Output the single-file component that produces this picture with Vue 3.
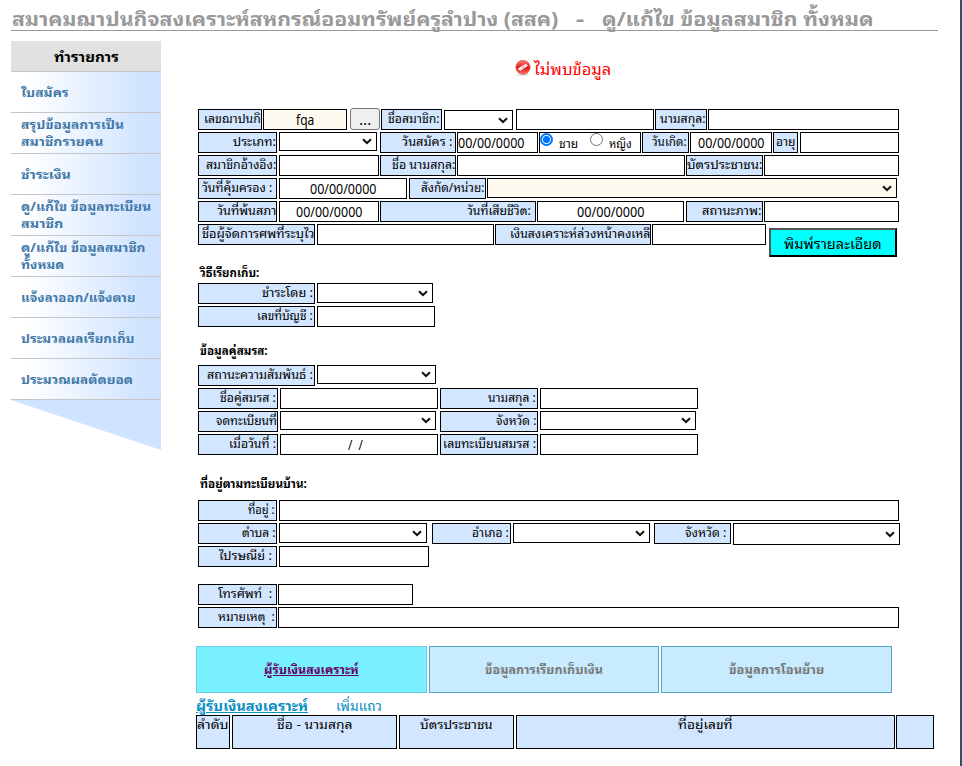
<script setup>
// Stretches a text run to its designed advance width, whatever face is installed.
const vFit = {
  mounted(el, { value }) {
    const natural = el.offsetWidth
    if (!value || !natural) return
    el.style.transform = `scaleX(${value / natural})`
    el.style.marginRight = `${value - natural}px`
  },
}

const menu = [
  [['ใบสมัคร', 48]],
  [['สรุปข้อมูลการเป็น', 103], ['สมาชิกรายคน', 82]],
  [['ชำระเงิน', 50]],
  [['ดู/แก้ไข ข้อมูลทะเบียน', 130], ['สมาชิก', 42]],
  [['ดู/แก้ไข ข้อมูลสมาชิก', 125], ['ทั้งหมด', 43]],
  [['แจ้งลาออก/แจ้งตาย', 115]],
  [['ประมวลผลเรียกเก็บ', 114]],
  [['ประมวณผลตัดยอด', 112]],
]

// Each cell: kind, left edge, right edge, text, text start, text end, height.
const group = (title, rows) => ({
  title,
  rows: rows.map((cells) => {
    let cursor = 198
    return cells.map(([kind, from, to, text = '', start = 0, end = 0, height = 21]) => {
      const cell = {
        kind,
        text,
        fit: end - start,
        box: { marginLeft: `${from - cursor}px`, width: `${to - from}px`, height: `${height}px` },
        lead: { marginLeft: `${start - from - 1}px` },
      }
      cursor = to
      return cell
    })
  }),
})

const zero = '00/00/0000'
const groups = [
  group(null, [
    [['label', 198, 262, 'เลขฌาปนกิ', 204, 261], ['input ivory', 263, 347, 'fqa', 296, 314], ['more', 350, 380, '...', 359, 371, 22], ['label', 381, 442, 'ชื่อสมาชิก:', 388, 440], ['select low', 444, 513, '', 0, 0, 20], ['input', 516, 654], ['label', 655, 707, 'นามสกุล:', 660, 706], ['input', 708, 899]],
    [['label', 198, 277, 'ประเภท:', 233, 276], ['select', 279, 377, '', 0, 0, 19], ['label', 380, 456, 'วันสมัคร :', 402, 452], ['input', 457, 538, zero, 458, 524], ['radio', 539, 641], ['label', 642, 689, 'วันเกิด:', 652, 687], ['input', 690, 772, zero, 698, 764], ['label', 773, 798, 'อายุ', 776, 795], ['input', 800, 899]],
    [['label', 198, 277, 'สมาชิกอ้างอิง:', 206, 276], ['input', 279, 379], ['label', 380, 456, 'ชื่อ นามสกุล:', 392, 455], ['input', 457, 685], ['label', 686, 763, 'บัตรประชาชน:', 687, 762], ['input', 764, 899]],
    [['label', 198, 277, 'วันที่คุ้มครอง :', 202, 272], ['input', 279, 407, zero, 310, 376], ['label', 409, 486, 'สังกัด/หน่วย:', 421, 484], ['select ivory', 487, 897, '', 0, 0, 20]],
    [['label', 198, 277, 'วันที่พ้นสภา', 217, 276], ['input', 279, 379, zero, 296, 362], ['label', 380, 536, 'วันที่เสียชีวิต:', 467, 531], ['input', 537, 684, zero, 577, 644], ['label', 686, 763, 'สถานะภาพ:', 702, 762], ['input', 764, 899]],
    [['label', 198, 315, 'ชื่อผู้จัดการศพที่ระบุไว', 202, 314], ['input', 317, 494], ['label', 495, 651, 'เงินสงเคราะห์ล่วงหน้าคงเหลื', 510, 650], ['input', 652, 766], ['print', 769, 897, 'พิมพ์รายละเอียด', 783, 881, 29]],
  ]),
  group('วิธีเรียกเก็บ:', [
    [['label', 198, 315, 'ชำระโดย :', 262, 313], ['select', 317, 433, '', 0, 0, 20]],
    [['label', 198, 315, 'เลขที่บัญชี :', 257, 313], ['input', 317, 435]],
  ]),
  group('ข้อมูลคู่สมรส:', [
    [['label', 198, 315, 'สถานะความสัมพันธ์ :', 207, 313], ['select', 317, 436, '', 0, 0, 19]],
    [['label', 198, 278, 'ชื่อคู่สมรส :', 220, 276], ['input', 280, 438], ['label', 440, 538, 'นามสกุล :', 488, 536], ['input', 540, 698]],
    [['label', 198, 278, 'จดทะเบียนที่', 216, 277], ['select', 280, 436, '', 0, 0, 19], ['label', 440, 538, 'จังหวัด :', 496, 536], ['select', 540, 696, '', 0, 0, 19]],
    [['label', 198, 278, 'เมื่อวันที่ :', 229, 276], ['input', 280, 438, '/  /', 348, 363], ['label', 440, 538, 'เลขทะเบียนสมรส :', 443, 536], ['input', 540, 698]],
  ]),
  group('ที่อยู่ตามทะเบียนบ้าน:', [
    [['label', 198, 277, 'ที่อยู่ :', 248, 275], ['input', 279, 899]],
    [['label', 198, 277, 'ตำบล :', 242, 275], ['select', 279, 427, '', 0, 0, 20], ['label', 432, 511, 'อำเภอ :', 472, 509], ['select', 513, 650, '', 0, 0, 20], ['label', 654, 731, 'จังหวัด :', 685, 726], ['select', 733, 900, '', 0, 0, 22]],
    [['label', 198, 277, 'ไปรษณีย์ :', 219, 272], ['input', 279, 429]],
  ]),
  group(null, [
    [['label', 198, 277, 'โทรศัพท์  :', 218, 272], ['input', 278, 413]],
    [['label', 198, 277, 'หมายเหตุ  :', 218, 275], ['input', 278, 899]],
  ]),
]
const titleWidths = [0, 59, 68, 107, 0]

const tabs = [
  ['ผู้รับเงินสงเคราะห์', 95],
  ['ข้อมูลการเรียกเก็บเงิน', 118],
  ['ข้อมูลการโอนย้าย', 95],
]
const columns = [['ลำดับ', 31], ['ชื่อ - นามสกุล', 76], ['บัตรประชาชน', 73], ['ที่อยู่เลขที่', 55], ['', 0]]
</script>

<template>
  <div class="page">
    <header class="title">
      <span v-fit="546" class="t">สมาคมฌาปนกิจสงเคราะห์สหกรณ์ออมทรัพย์ครูลำปาง (สสค)</span>
      <span v-fit="8" class="t">-</span>
      <span v-fit="272" class="t">ดู/แก้ไข ข้อมูลสมาชิก ทั้งหมด</span>
    </header>
    <div class="body">
      <nav class="side">
        <h2><span v-fit="65" class="t">ทำรายการ</span></h2>
        <a v-for="(item, i) in menu" :key="i">
          <div v-for="line in item" :key="line[0]"><span v-fit="line[1]" class="t">{{ line[0] }}</span></div>
        </a>
        <div class="tail"></div>
      </nav>
      <main>
        <div class="alert">
          <svg width="16" height="16" viewBox="0 0 16 16">
            <defs>
              <linearGradient id="ball" x1="0" y1="0" x2="0" y2="1">
                <stop offset="0" stop-color="#f58080" />
                <stop offset=".45" stop-color="#e52b2b" />
                <stop offset=".55" stop-color="#dc1414" />
                <stop offset="1" stop-color="#ff7a6a" />
              </linearGradient>
            </defs>
            <ellipse cx="8" cy="14.6" rx="6" ry="1.2" fill="#ddd" />
            <circle cx="8" cy="7.3" r="7.1" fill="url(#ball)" stroke="#e04a4a" stroke-width=".6" />
            <path d="M3 8.4 Q3.8 11 6.2 10.2 L12.8 5.8 Q12 3.4 9.6 4.5Z" fill="#fff" />
            <path d="M6.4 8.8 L9.6 6" stroke="#e66" stroke-width="1" />
          </svg>
          <span v-fit="77" class="t">ไม่พบข้อมูล</span>
        </div>

        <section v-for="(g, gi) in groups" :key="gi" :class="'group g' + gi">
          <h3 v-if="g.title"><span v-fit="titleWidths[gi]" class="t">{{ g.title }}</span></h3>
          <div v-for="(row, ri) in g.rows" :key="ri" class="row">
            <div v-for="(c, ci) in row" :key="ci" class="cell" :class="c.kind" :style="c.box">
              <span v-if="c.text" v-fit="c.fit" class="t" :style="c.lead">{{ c.text }}</span>
              <svg v-if="c.kind.startsWith('select')" class="chev" width="10" height="7" viewBox="0 0 10 7">
                <path d="M1 1.2 L5 5 L9 1.2" fill="none" stroke="#111" stroke-width="2" />
              </svg>
              <template v-if="c.kind === 'radio'">
                <i class="dot on"></i><span v-fit="19" class="t male">ชาย</span>
                <i class="dot"></i><span v-fit="23" class="t female">หญิง</span>
              </template>
            </div>
          </div>
        </section>

        <div class="tabs">
          <a v-for="(tab, i) in tabs" :key="i" :class="{ active: i === 0 }"><span v-fit="tab[1]" class="t">{{ tab[0] }}</span></a>
        </div>
        <div class="links">
          <a class="u"><span v-fit="112" class="t">ผู้รับเงินสงเคราะห์</span></a>
          <a><span v-fit="46" class="t">เพิ่มแถว</span></a>
        </div>
        <div class="grid">
          <div v-for="(col, i) in columns" :key="i"><span v-if="col[0]" v-fit="col[1]" class="t">{{ col[0] }}</span></div>
        </div>
      </main>
    </div>
  </div>
</template>

<style>
body { margin: 0; overflow: hidden; background: #fff; }
</style>

<style scoped>
* { box-sizing: border-box; }
.page {
  width: 962px; height: 766px; overflow: hidden; padding: 7px 0 0 11px;
  border-right: 2px solid #30506a; background: #fff; color: #000;
  font-family: Tahoma, "Noto Sans Thai Looped", Loma, Waree, "Noto Sans Thai", "Noto Sans", "DejaVu Sans", sans-serif; font-size: 12px;
}
.t { display: inline-block; flex: none; white-space: pre; transform-origin: 0 50%; }
.title {
  display: flex; gap: 18px; width: 927px; height: 24px; padding-left: 1px;
  border-bottom: 1px solid #999; color: #999; font-weight: bold; font-size: 19px; line-height: 22px;
}
.body { display: flex; }
.side { width: 150px; padding-top: 10px; flex: none; }
.side h2 {
  display: flex; justify-content: center; margin: 0; height: 31px; background: #e1e1e1;
  border-bottom: 1px solid #c6c6c6; font-size: 14px; line-height: 29px;
}
.side a {
  display: flex; flex-direction: column; justify-content: center; height: 41px; padding: 0 0 2px 10px;
  border-bottom: 1px solid #c6c6c6; color: #4379a8; font-weight: bold; font-size: 12px; line-height: 17px;
  background: linear-gradient(90deg, #fff 10%, #d0e4ff 88%);
}
.side a > div { display: flex; }
.tail { height: 50px; background: #d0e4ff; clip-path: polygon(0 0, 100% 0, 100% 100%); }
main { padding: 28px 0 0 37px; }
.alert { display: flex; height: 50px; padding-left: 317px; gap: 3px; color: #f00; font-size: 15px; line-height: 19px; }
.alert svg { flex: none; margin-top: 1px; }
.group h3 { display: flex; margin: 0; padding-left: 2px; height: 22px; font-size: 12px; line-height: 21px; }
.g1 { padding-top: 14px; }
.g2 { padding-top: 10px; }
.g2 h3 { height: 26px; }
.g3 { padding-top: 15px; }
.g3 h3 { height: 28px; }
.g4 { padding-top: 15px; }
.row { display: flex; height: 23px; }
.cell { display: flex; flex: none; border: 1px solid #000; background: #fff; line-height: 18px; font-size: 14px; }
.label { background: #d3e6ff; font-size: 12px; line-height: 15px; }
.ivory { background: #fffaf0; }
.low { margin-top: 1px; }
.select { justify-content: flex-end; align-items: center; padding-right: 4px; }
.more { margin-top: -1px; background: #efefef; border-color: #767676; border-radius: 3px; line-height: 20px; }
.print { margin-top: 4px; background: #0ff; border: 2px outset #000; border-color: #555 #000 #000 #555; line-height: 25px; font-size: 14px; }
.radio { font-size: 12px; line-height: 20px; }
.dot { flex: none; width: 13px; height: 13px; margin-top: 0; border: 1px solid #767676; border-radius: 50%; background: #fff; }
.dot.on { border: 2px solid #0075ff; background: radial-gradient(circle, #0075ff 3.2px, #fff 4px); }
.male { margin-left: 6px; }
.male + .dot { margin-left: 12px; }
.female { margin-left: 6px; }
.tabs { display: flex; gap: 2px; margin: 16px 0 0 -2px; }
.tabs a {
  display: flex; justify-content: center; width: 230px; height: 47px; border: 1px solid #5aa6c8;
  background: #c8ebff; color: #777; font-weight: bold; font-size: 12px; line-height: 43px;
}
.tabs a.active, .tabs a:last-child { width: 231px; }
.tabs a.active { background: #78f0ff; border-color: #6fc8e4; color: #606; }
.tabs .active .t, .u .t { text-decoration: underline; }
.links { display: flex; gap: 28px; height: 22px; margin-left: -2px; color: #0b8ec4; font-size: 14px; line-height: 23px; }
.links a { display: flex; }
.u { font-weight: bold; }
.grid { display: grid; grid-template-columns: 34px 165px 115px 379px 37px; column-gap: 2px; margin-left: -2px; }
.grid div { display: flex; justify-content: center; height: 34px; border: 1px solid #000; background: #d3e6ff; line-height: 15px; font-size: 13px; }
.grid div:last-child { margin-left: -1px; }
</style>
